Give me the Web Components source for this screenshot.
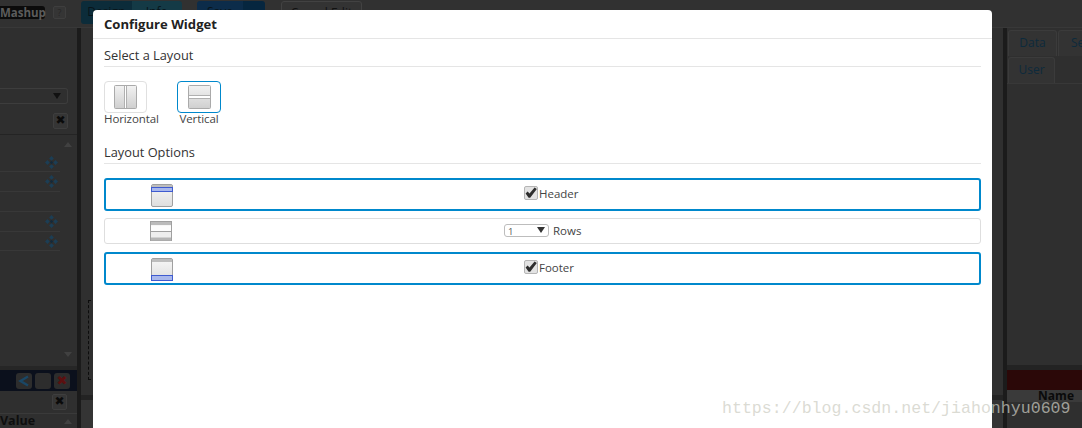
<!DOCTYPE html>
<html><head><meta charset="utf-8"><style>
html,body{margin:0;padding:0;width:1082px;height:428px;overflow:hidden;background:#2f2f2f}
body{position:relative;font-family:"Open Sans","Liberation Sans",sans-serif}
</style></head><body>
<app-backdrop></app-backdrop>
<config-modal>
  <modal-section slot="a" label="Select a Layout">
    <div style="display:flex;gap:30px;padding:14px 0 10px">
      <layout-tile label="Horizontal" kind="h" style="width:43px"></layout-tile>
      <layout-tile label="Vertical" kind="v" selected></layout-tile>
    </div>
  </modal-section>
  <modal-section slot="b" label="Layout Options">
    <div style="display:flex;flex-direction:column;padding-top:14px">
      <option-row kind="header" active label="Header"></option-row>
      <option-row kind="rows" label="Rows"></option-row>
      <option-row kind="footer" active label="Footer"></option-row>
    </div>
  </modal-section>
</config-modal>
<water-mark>https://blog.csdn.net/jiahonhyu0609</water-mark>
<script>
function def(name,html){customElements.define(name,class extends HTMLElement{
  connectedCallback(){if(this.shadowRoot)return;const r=this.attachShadow({mode:'open'});r.innerHTML=typeof html==='function'?html(this):html;}
});}
const d=(x,y,r=2.1)=>`<path d="M${x} ${y-r}L${x+r} ${y}L${x} ${y+r}L${x-r} ${y}z"/>`;
const blueCross=`<svg width="13" height="13" viewBox="0 0 13 13"><g fill="#1c3e55">${d(6.5,2.4,2.4)}${d(6.5,10.6,2.4)}${d(2.4,6.5,2.4)}${d(10.6,6.5,2.4)}</g><path d="M6.5 4.8L8.2 6.5L6.5 8.2L4.8 6.5z" fill="#14293a"/></svg>`;
def('list-row',h=>`<style>:host{display:flex;align-items:center;justify-content:flex-end;height:${h.getAttribute('h')}px;border-bottom:1px solid #383838;padding-right:2px;box-sizing:border-box;width:60px}</style>${h.hasAttribute('icon')?blueCross:''}`);
def('app-backdrop',`<style>
:host{display:block;width:1082px;height:428px;background:#2f2f2f;overflow:hidden;font:12px "Open Sans",sans-serif;color:#0d0d0d}
.top{height:27px;display:flex;align-items:center;border-bottom:1px solid #383838;background:#313131}
.mash{background:#0b0b0b;color:#5c5c5c;font-weight:700;font-size:11.5px;line-height:13px;height:13px;width:45px;border-radius:0 3px 3px 0;white-space:nowrap;text-align:right;padding-right:2px;box-sizing:border-box;margin-top:-3px}
.q{width:11px;height:11px;margin:-3px 0 0 8px;border:1px solid #3e3e3e;border-radius:2px;font-size:9px;line-height:11px;text-align:center;color:#262626;background:#353535}
.btn{height:23px;margin-top:-3px;box-sizing:border-box;border-radius:3px;font-size:12px;line-height:22px;text-align:center;color:#081419}
.b1{margin-left:15px;width:101px;display:flex;overflow:hidden}.b1 i{flex:1;background:#0c2c3a;font-style:normal}.b1 i+i{background:#143a46}
.b2{margin-left:15px;width:68px;display:flex;overflow:hidden}.b2 i{flex:1;background:#0c2c4a;font-style:normal}.b2 i+i{flex:0 0 22px;background:#06263f}
.b3{margin-left:16px;width:81px;border:1px solid #424242;background:#333;color:#111}
.main{display:grid;grid-template-columns:77px 4px 922px 4px 75px;height:400px}
.left{display:flex;flex-direction:column;background:#2f2f2f;min-width:0}
.dd{margin-top:60px;height:16px;width:68px;box-sizing:border-box;border:1px solid #3d3d3d;border-left:0;border-radius:0 3px 3px 0;display:flex;align-items:center;justify-content:flex-end;padding-right:6px;flex:none}
.tri{width:0;height:0;border:4px solid transparent;border-top:6px solid #111;border-bottom:0}
.srch{margin-top:9px;height:16px;width:68px;display:flex;justify-content:flex-end;flex:none}
.x{width:15px;height:16px;border:1px solid #3e3e3e;box-sizing:border-box;border-radius:2px;font-size:12px;line-height:13px;text-align:center;color:#0a0a0a;font-weight:700;font-family:"DejaVu Sans",sans-serif;background:#353535}
.hd{margin-top:5px;border-top:1px solid #242424;height:19px;display:flex;flex:none;justify-content:flex-end;align-items:center;padding-right:5px;width:77px;box-sizing:border-box}
.up{width:0;height:0;border:4px solid transparent;border-bottom:5px solid #414141;border-top:0}
.list{flex:none}
.dn{flex:1;display:flex;justify-content:flex-end;align-items:flex-end;padding:0 5px 9px 0}
.dn span{border:4px solid transparent;border-top:5px solid #414141;border-bottom:0}
.sb{height:4px;background:#262626;flex:none}
.bar{height:21px;background:#0b101c;display:flex;align-items:center;padding-left:16px;gap:3px;flex:none}
.ic{width:16px;height:16px;border-radius:3px;background:#2d2d2d;font-size:13px;line-height:16px;text-align:center;font-weight:700;font-family:"DejaVu Sans",sans-serif;display:flex;align-items:center;justify-content:center}
.s2{height:23px;display:flex;align-items:center;justify-content:flex-end;padding-right:10px;flex:none;border-bottom:1px solid #3a3a3a;box-sizing:border-box}
.val{font-weight:700;font-size:12.5px;line-height:14px;height:14px;color:#0e0e0e;display:flex;justify-content:space-between;align-items:center;padding-right:5px;flex:none}
.div{background:#1b1b1b}
.center{display:flex;flex-direction:column;background:#2f2f2f;min-width:0}
.c1{flex:1}.c2{height:5px;background:#232323;flex:none}.c3{height:28px;background:#343434;flex:none}
.dash{margin:272px 0 0 7px;width:30px;height:80px;box-sizing:border-box;border:1px dashed #0c0c0c;border-right:0}
.right{display:flex;flex-direction:column;background:#2f2f2f;min-width:0;overflow:hidden}
.tabs{display:flex;gap:1px;padding-top:2px;padding-left:1px;height:26px;flex:none}
.tab{flex:none;width:49px;height:26px;box-sizing:border-box;background:#333;border:1px solid #3b3b3b;border-bottom:0;border-radius:3px 3px 0 0;color:#0d2a3c;font-size:12px;line-height:24px;text-align:center}
.r3{height:282px;flex:none;border-top:1px solid #383838;box-sizing:border-box}
.r4{height:5px;background:#232323;flex:none}
.r5{height:20px;background:#2b0808;flex:none}
.r6{background:#3a3a3a;height:12px;text-align:right;font-weight:700;font-size:12px;line-height:12px;padding-right:8px;color:#0a0a0a;flex:none}
</style>
<div class="top"><div class="mash">Mashup</div><div class="q">?</div>
<div class="btn b1"><i>Design</i><i>Info</i></div><div class="btn b2"><i>Save</i><i></i></div><div class="btn b3">Cancel Edit</div></div>
<div class="main">
 <div class="left">
  <div class="dd"><span class="tri"></span></div>
  <div class="srch"><span class="x">✖</span></div>
  <div class="hd"><span class="up"></span></div>
  <div class="list"><list-row h="19" icon></list-row><list-row h="20" icon></list-row><list-row h="20"></list-row><list-row h="20" icon></list-row><list-row h="19" icon></list-row></div>
  <div class="dn"><span></span></div>
  <div class="sb"></div>
  <div class="bar"><span class="ic"><svg width="12" height="12" viewBox="0 0 12 12"><path d="M10 1.5L2.5 6l7.5 4.5" fill="none" stroke="#1a4766" stroke-width="2.4"/></svg></span><span class="ic"></span><span class="ic" style="color:#5c1010">✖</span></div>
  <div class="s2"><span class="x">✖</span></div>
  <div class="val"><span>Value</span><span class="up"></span></div>
 </div>
 <div class="div"></div>
 <div class="center"><div class="c1"><div class="dash"></div></div><div class="c2"></div><div class="c3"></div></div>
 <div class="div"></div>
 <div class="right">
  <div class="tabs"><div class="tab">Data</div><div class="tab" style="text-align:left;padding-left:12px">Se</div></div>
  <div class="tabs" style="padding-top:1px"><div class="tab" style="width:47px">User</div></div>
  <div class="r3"></div><div class="r4"></div><div class="r5"></div><div class="r6">Name</div>
 </div>
</div>`);
def('config-modal',`<style>
:host{position:absolute;left:93px;top:10px;width:899px;height:418px;background:#fff;border-radius:4px 4px 0 0;display:block;color:#333;font-family:"Open Sans",sans-serif}
h1{margin:0;font-size:13.1px;font-weight:700;line-height:28px;height:28px;padding-left:11px;border-bottom:1px solid #e5e5e5;color:#222}
.body{padding:0 11px;display:flex;flex-direction:column}
</style><h1>Configure Widget</h1><div class="body"><slot name="a"></slot><slot name="b"></slot></div>`);
def('modal-section',h=>`<style>
:host{display:block}
.t{font-size:12.8px;line-height:22px;padding-top:5px;height:22px;border-bottom:1px solid #e5e5e5;color:#333}
</style><div class="t">${h.getAttribute('label')}</div><slot></slot>`);
const grad=`<defs><linearGradient id="g" x1="0" y1="0" x2="0" y2="1"><stop offset="0" stop-color="#f2f2f2"/><stop offset="1" stop-color="#cfcfcf"/></linearGradient></defs><rect x=".5" y=".5" width="22" height="23" rx="1" fill="url(#g)" stroke="#aaa"/>`;
const tileIcons={
 h:`<svg width="23" height="24" viewBox="0 0 23 24">${grad}<path d="M10.5 1v22M12.5 1v22" stroke="#b0b0b0"/><path d="M11.5 1v22" stroke="#fff"/></svg>`,
 v:`<svg width="23" height="24" viewBox="0 0 23 24">${grad}<path d="M1 10.5h21M1 13.5h21" stroke="#b0b0b0"/><path d="M1 12h21" stroke="#fff" stroke-width="2"/></svg>`};
def('layout-tile',h=>{const s=h.hasAttribute('selected');return `<style>
:host{display:flex;flex-direction:column;align-items:${s?'center':'flex-start'};width:44px;font-size:11.5px;color:#444}
.b{width:100%;height:32px;box-sizing:border-box;border:1px solid ${s?'#0088cc':'#e0e0e0'};border-radius:4px;display:flex;align-items:center;justify-content:center;background:#fff}
svg{display:block}
.l{line-height:14px;white-space:nowrap;height:14px;margin-top:-1px;letter-spacing:-.1px}
</style><div class="b">${tileIcons[h.getAttribute('kind')]}</div><div class="l">${h.getAttribute('label')}</div>`});
def('row-icon',h=>{const k=h.getAttribute('kind');
 const id='g'+k;
 let inner='';
 if(k==='header')inner=`<rect x=".5" y=".5" width="21" height="22" rx="1.5" fill="url(#${id})" stroke="#a0a0a0"/><rect x="1" y="1" width="20" height="3" fill="#bdbdbd"/><rect x=".5" y="3.5" width="21" height="4" fill="#a9b8ec" stroke="#3f5bd0"/>`;
 if(k==='footer')inner=`<rect x=".5" y=".5" width="21" height="22" rx="1.5" fill="url(#${id})" stroke="#a0a0a0"/><rect x="1" y="1" width="20" height="3" fill="#bdbdbd"/><rect x=".5" y="17.5" width="21" height="5" fill="#a9b8ec" stroke="#3f5bd0"/>`;
 if(k==='rows')inner=`<rect x=".5" y=".5" width="21" height="19" fill="#eee" stroke="#a0a0a0"/><rect x="1" y="1" width="20" height="3" fill="#bbb"/><rect x="1" y="4.5" width="20" height="6" fill="#fdfdfd"/><path d="M0 10.5h22" stroke="#a0a0a0"/><rect x="1" y="16.5" width="20" height="3" fill="#b5b5b5"/>`;
 return `<style>:host{display:block;line-height:0;${k==='rows'?'':'margin-top:1px'}}</style><svg width="22" height="${k==='rows'?20:23}"><defs><linearGradient id="${id}" x1="0" y1="0" x2="0" y2="1"><stop offset="0" stop-color="#f7f7f7"/><stop offset="1" stop-color="#dedede"/></linearGradient></defs>${inner}</svg>`});
def('check-box',`<style>:host{display:block;width:14px;height:14px;box-sizing:border-box;background:#e3e3e3;border:1px solid #b5b5b5;border-radius:2px;line-height:0}svg{overflow:visible}</style><svg width="12" height="12" viewBox="0 0 12 12"><path d="M.6 6.6L2.6 4.6L4.5 6.6L9.6.4L11.8 1.9L5.2 10.8H3.6z" fill="#2e2e2e"/></svg>`);
def('row-select',`<style>:host{display:flex;width:45px;height:13px;box-sizing:border-box;border:1px solid #bdbdbd;border-radius:3px;font-size:9.5px;line-height:13px;color:#555;padding:0 3px;justify-content:space-between;align-items:flex-start}
i{margin:2px 0 0;border:4px solid transparent;border-top:6px solid #333;border-bottom:0;width:0;height:0}</style><span>1</span><i></i>`);
def('option-row',h=>{const a=h.hasAttribute('active'),k=h.getAttribute('kind'),r=k==='rows';
 return `<style>
:host{display:flex;align-items:center;box-sizing:border-box;width:877px;height:${a?33:26}px;border:${a?2:1}px solid ${a?'#0088cc':'#dedede'};border-radius:3px;padding-left:45px;margin-bottom:${k==='header'?7:r?8:0}px;font-size:11.5px;color:#444}
.m{margin:${r?-1:-3}px 0 0 ${r?332:351}px;display:flex;align-items:center;gap:${r?4:1}px}
</style><row-icon kind="${k}"></row-icon><div class="m">${r?'<row-select></row-select>':'<check-box></check-box>'}<span>${h.getAttribute('label')}</span></div>`});
def('water-mark',`<style>:host{position:absolute;left:722px;top:398px;font:16.6px/22px "Liberation Mono",monospace;color:rgba(205,205,195,.72);white-space:nowrap}</style><slot></slot>`);
</script>
</body></html>
